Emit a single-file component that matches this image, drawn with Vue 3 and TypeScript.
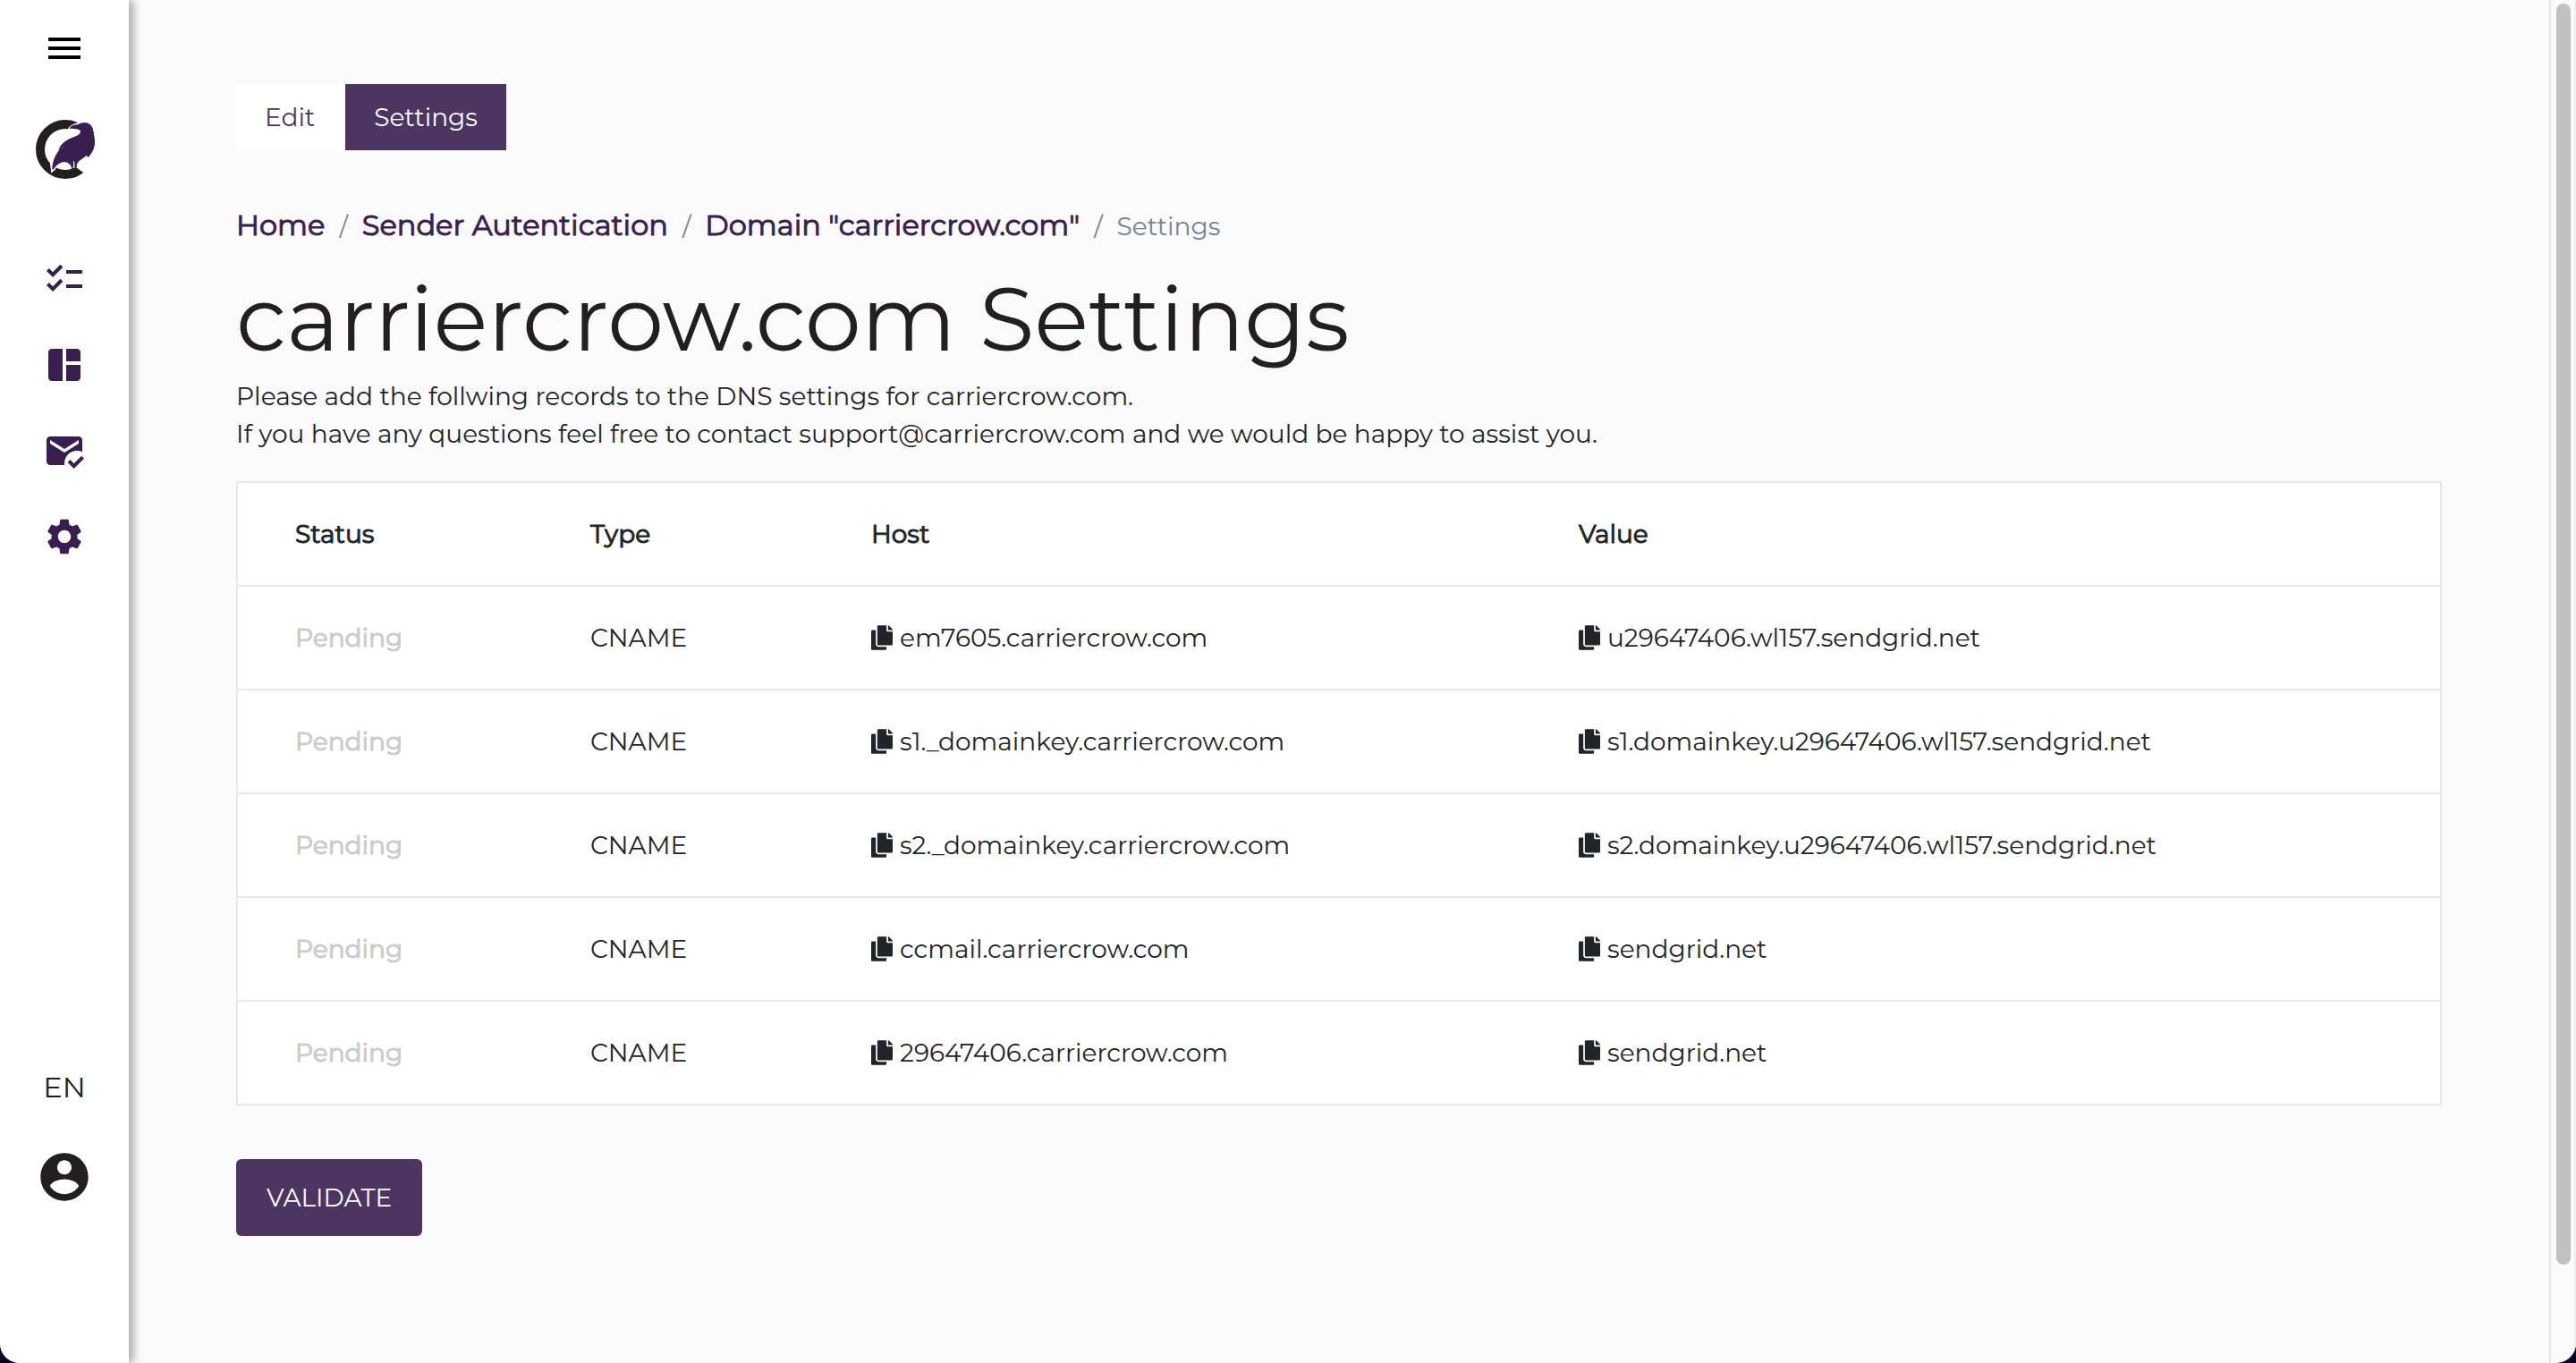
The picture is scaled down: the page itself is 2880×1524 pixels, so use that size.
<script setup lang="ts">
interface DnsRecord {
  status: string
  type: string
  host: string
  value: string
}

interface NavItem {
  label: string
  path: string
}

const domain = 'carriercrow.com'

const records: DnsRecord[] = [
  { status: 'Pending', type: 'CNAME', host: 'em7605.carriercrow.com', value: 'u29647406.wl157.sendgrid.net' },
  { status: 'Pending', type: 'CNAME', host: 's1._domainkey.carriercrow.com', value: 's1.domainkey.u29647406.wl157.sendgrid.net' },
  { status: 'Pending', type: 'CNAME', host: 's2._domainkey.carriercrow.com', value: 's2.domainkey.u29647406.wl157.sendgrid.net' },
  { status: 'Pending', type: 'CNAME', host: 'ccmail.carriercrow.com', value: 'sendgrid.net' },
  { status: 'Pending', type: 'CNAME', host: '29647406.carriercrow.com', value: 'sendgrid.net' },
]

const crumbs: string[] = ['Home', 'Sender Autentication', `Domain "${domain}"`]

const navItems: NavItem[] = [
  {
    label: 'Tasks',
    path: 'M22 7h-9v2h9V7zm0 8h-9v2h9v-2zM5.54 11 2 7.46l1.41-1.41 2.12 2.12 4.24-4.24 1.41 1.41L5.54 11zm0 8L2 15.46l1.41-1.41 2.12 2.12 4.24-4.24 1.41 1.41L5.54 19z',
  },
  {
    label: 'Dashboard',
    path: 'M11 21H5c-1.1 0-2-.9-2-2V5c0-1.1.9-2 2-2h6v18zm2 0h6c1.1 0 2-.9 2-2v-7h-8v9zm8-11V5c0-1.1-.9-2-2-2h-6v7h8z',
  },
  {
    label: 'Mail',
    path: 'M12 19c0-3.87 3.13-7 7-7 1.08 0 2.09.25 3 .68V6c0-1.1-.9-2-2-2H4c-1.1 0-2 .9-2 2v12c0 1.1.9 2 2 2h8.08c-.06-.33-.08-.66-.08-1zM4 6l8 5 8-5v2l-8 5-8-5V6zm13.34 16-3.54-3.54 1.41-1.41 2.12 2.12 4.24-4.24L23 16.34 17.34 22z',
  },
  {
    label: 'Settings',
    path: 'M19.14 12.94c.04-.3.06-.61.06-.94 0-.32-.02-.64-.07-.94l2.03-1.58c.18-.14.23-.41.12-.61l-1.92-3.32c-.12-.22-.37-.29-.59-.22l-2.39.96c-.5-.38-1.03-.7-1.62-.94l-.36-2.54c-.04-.24-.24-.41-.48-.41h-3.84c-.24 0-.43.17-.47.41l-.36 2.54c-.59.24-1.13.57-1.62.94l-2.39-.96c-.22-.08-.47 0-.59.22L2.74 8.87c-.12.21-.08.47.12.61l2.03 1.58c-.05.3-.09.63-.09.94s.02.64.07.94l-2.03 1.58c-.18.14-.23.41-.12.61l1.92 3.32c.12.22.37.29.59.22l2.39-.96c.5.38 1.03.7 1.62.94l.36 2.54c.05.24.24.41.48.41h3.84c.24 0 .44-.17.47-.41l.36-2.54c.59-.24 1.13-.56 1.62-.94l2.39.96c.22.08.47 0 .59-.22l1.92-3.32c.12-.22.07-.47-.12-.61l-2.01-1.58zM12 15.6c-1.98 0-3.6-1.62-3.6-3.6s1.62-3.6 3.6-3.6 3.6 1.62 3.6 3.6-1.62 3.6-3.6 3.6z',
  },
]

const copyPath =
  'M320 448v40c0 13.255-10.745 24-24 24H24c-13.255 0-24-10.745-24-24V120c0-13.255 10.745-24 24-24h72v296c0 30.879 25.121 56 56 56h168zm0-344V0H152c-13.255 0-24 10.745-24 24v368c0 13.255 10.745 24 24 24h272c13.255 0 24-10.745 24-24V128H344c-13.2 0-24-10.8-24-24zm120.971-31.029L375.029 7.029A24 24 0 0 0 358.059 0H352v96h96v-6.059a24 24 0 0 0-7.029-16.97z'

function copy(text: string): void {
  navigator.clipboard?.writeText(text)
}
</script>

<template>
  <div class="shell">
    <aside class="sidebar">
      <button class="icon-button menu" type="button" aria-label="Menu">
        <svg viewBox="0 0 24 24"><path d="M3 18h18v-2H3v2zm0-5h18v-2H3v2zm0-7v2h18V6H3z" /></svg>
      </button>
      <a class="logo" href="#" aria-label="CarrierCrow">
        <svg viewBox="114 402 204 204">
          <circle class="ring" cx="219" cy="501" r="84" />
          <path class="gap" d="M262 408 L330 400 L330 600 L292 590 L278 578 L250 558 L262 520 L226 434 Q240 414 262 412Z" />
          <path class="tail" d="M168 548 L172 581 L186 568 L196 530Z" />
          <path class="ring-end" d="M241 564 L257 563 L278 578 Q262 592 240 597Z" />
          <path class="bird" d="M232 431 C237 422 248 418 261 418 C268 413 276 411 284 411 C302 412 312 424 313 441 L316 446 L314 449 C318 460 319 475 317 489 C314 506 305 519 293 530 C294 526 293 523 291 521 C280 531 262 538 258 551 L257 562 L251 563 L249 540 L246 541 L246 562 L241 565 C238 553 229 544 217 543 C202 543 187 555 178 570 L175 566 C176 538 188 512 207 496 C213 493 217 492 219 491 C209 492 202 498 196 507 C200 484 223 468 254 457 C266 452 272 444 269 437 C258 431 244 431 232 431Z" />
        </svg>
      </a>
      <nav class="nav">
        <a v-for="item in navItems" :key="item.label" class="icon-button" href="#" :aria-label="item.label">
          <svg viewBox="0 0 24 24"><path :d="item.path" /></svg>
        </a>
      </nav>
      <div class="account">
        <button class="language" type="button">EN</button>
        <button class="avatar" type="button" aria-label="Account">
          <svg viewBox="0 0 24 24">
            <path d="M12 2C6.48 2 2 6.48 2 12s4.48 10 10 10 10-4.48 10-10S17.52 2 12 2zm0 3c1.66 0 3 1.34 3 3s-1.34 3-3 3-3-1.34-3-3 1.34-3 3-3zm0 14.2c-2.5 0-4.71-1.28-6-3.22.03-1.99 4-3.08 6-3.08 1.99 0 5.97 1.09 6 3.08-1.29 1.94-3.5 3.22-6 3.22z" />
          </svg>
        </button>
      </div>
    </aside>

    <main class="content">
      <div class="tabs">
        <a class="tab" href="#">Edit</a>
        <a class="tab active" href="#" aria-current="page">Settings</a>
      </div>

      <nav class="breadcrumb" aria-label="Breadcrumb">
        <template v-for="crumb in crumbs" :key="crumb">
          <a href="#">{{ crumb }}</a>
          <span class="slash">/</span>
        </template>
        <span class="current">Settings</span>
      </nav>

      <h1>{{ domain }} Settings</h1>
      <p class="intro">
        Please add the follwing records to the DNS settings for {{ domain }}.<br />
        If you have any questions feel free to contact support@carriercrow.com and we would be happy to assist you.
      </p>

      <table class="records">
        <thead>
          <tr>
            <th class="col-status">Status</th>
            <th class="col-type">Type</th>
            <th class="col-host">Host</th>
            <th>Value</th>
          </tr>
        </thead>
        <tbody>
          <tr v-for="record in records" :key="record.host">
            <td class="pending">{{ record.status }}</td>
            <td>{{ record.type }}</td>
            <td>
              <div class="copyable">
                <button type="button" aria-label="Copy host" @click="copy(record.host)">
                  <svg viewBox="0 0 448 512"><path :d="copyPath" /></svg>
                </button>
                <span>{{ record.host }}</span>
              </div>
            </td>
            <td>
              <div class="copyable">
                <button type="button" aria-label="Copy value" @click="copy(record.value)">
                  <svg viewBox="0 0 448 512"><path :d="copyPath" /></svg>
                </button>
                <span>{{ record.value }}</span>
              </div>
            </td>
          </tr>
        </tbody>
      </table>

      <button class="validate" type="button">VALIDATE</button>
    </main>

    <div class="scroll-track" aria-hidden="true"><div class="scroll-thumb"></div></div>
  </div>
</template>

<style>
body {
  margin: 0;
  background: #0d0221;
}
</style>

<style scoped>
.shell {
  display: flex;
  min-height: 100vh;
  box-sizing: border-box;
  overflow: hidden;
  border-radius: 0 0 22px 22px;
  background: #fafafa;
  color: #212529;
  font-family: Montserrat, Inter, sans-serif;
  font-size: 28px;
  line-height: 42px;
}

button {
  padding: 0;
  border: 0;
  background: none;
  color: inherit;
  font: inherit;
  cursor: pointer;
}

a {
  color: inherit;
  text-decoration: none;
}

svg {
  display: block;
  fill: currentColor;
}

.sidebar {
  display: flex;
  flex: none;
  flex-direction: column;
  align-items: center;
  box-sizing: border-box;
  width: 144px;
  padding: 30px 0 176px;
  background: #fff;
  box-shadow: 6px 0 8px rgba(0, 0, 0, 0.28);
  color: #391f50;
}

.icon-button,
.icon-button svg {
  display: block;
  width: 48px;
  height: 48px;
}

.menu {
  color: #000;
}

.logo {
  margin-top: 56px;
}

.logo svg {
  width: 68px;
  height: 68px;
}

.ring {
  fill: none;
  stroke: #231f20;
  stroke-width: 30px;
}

.ring-end {
  fill: #231f20;
}

.gap,
.tail {
  fill: #fff;
}

.nav {
  display: flex;
  flex-direction: column;
  gap: 48px;
  margin-top: 86px;
}

.account {
  display: flex;
  flex-direction: column;
  align-items: center;
  gap: 44px;
  margin-top: auto;
  color: #231f20;
}

.language {
  font-size: 32px;
  line-height: 48px;
}

.avatar svg {
  width: 64px;
  height: 64px;
}

.content {
  flex: 1;
  min-width: 0;
  padding: 94px 120px;
}

.tabs {
  display: flex;
  gap: 2px;
}

.tab {
  padding: 16px 32px;
  background: #fff;
  color: #4c3661;
}

.tab.active {
  background: #4c3661;
  color: #fff;
}

.breadcrumb {
  display: flex;
  align-items: baseline;
  gap: 16px;
  margin-top: 60px;
  color: #391f50;
  font-size: 32px;
  line-height: 48px;
}

/* The regular face thickened by a stroke keeps its own advance widths. */
.breadcrumb a,
th,
.pending {
  font-weight: 400;
  -webkit-text-stroke: 1px currentColor;
}

.slash,
.current {
  color: #748491;
  font-size: 28px;
  line-height: 42px;
}

h1 {
  margin: 22px 0 8px;
  color: #231f20;
  font-size: 100px;
  font-weight: 400;
  line-height: 116px;
}

.intro {
  margin: 0 0 32px;
}

.records {
  width: 100%;
  border: 2px solid #e8e8e8;
  border-bottom: 0;
  border-spacing: 0;
  background: #fff;
  table-layout: fixed;
}

th,
td {
  padding: 36px 0 36px 64px;
  border-bottom: 2px solid #e8e8e8;
  text-align: left;
}

.col-status {
  width: 266px;
}

.col-type {
  width: 250px;
}

.col-host {
  width: 727px;
}

.pending {
  color: #ccc;
}

.copyable {
  display: flex;
  align-items: center;
  gap: 8px;
}

.copyable svg {
  width: 24px;
  height: 28px;
}

.validate {
  margin-top: 60px;
  padding: 22px 34px;
  border-radius: 6px;
  background: #4c3661;
  color: #fff;
}

.scroll-track {
  flex: none;
  box-sizing: border-box;
  width: 30px;
  padding: 4px 4px 4px 6px;
  border-right: 2px solid #f0f0f0;
  border-left: 2px solid #e8e8e8;
}

.scroll-thumb {
  width: 16px;
  height: 93%;
  border-radius: 8px;
  background: #c1c1c1;
}
</style>
